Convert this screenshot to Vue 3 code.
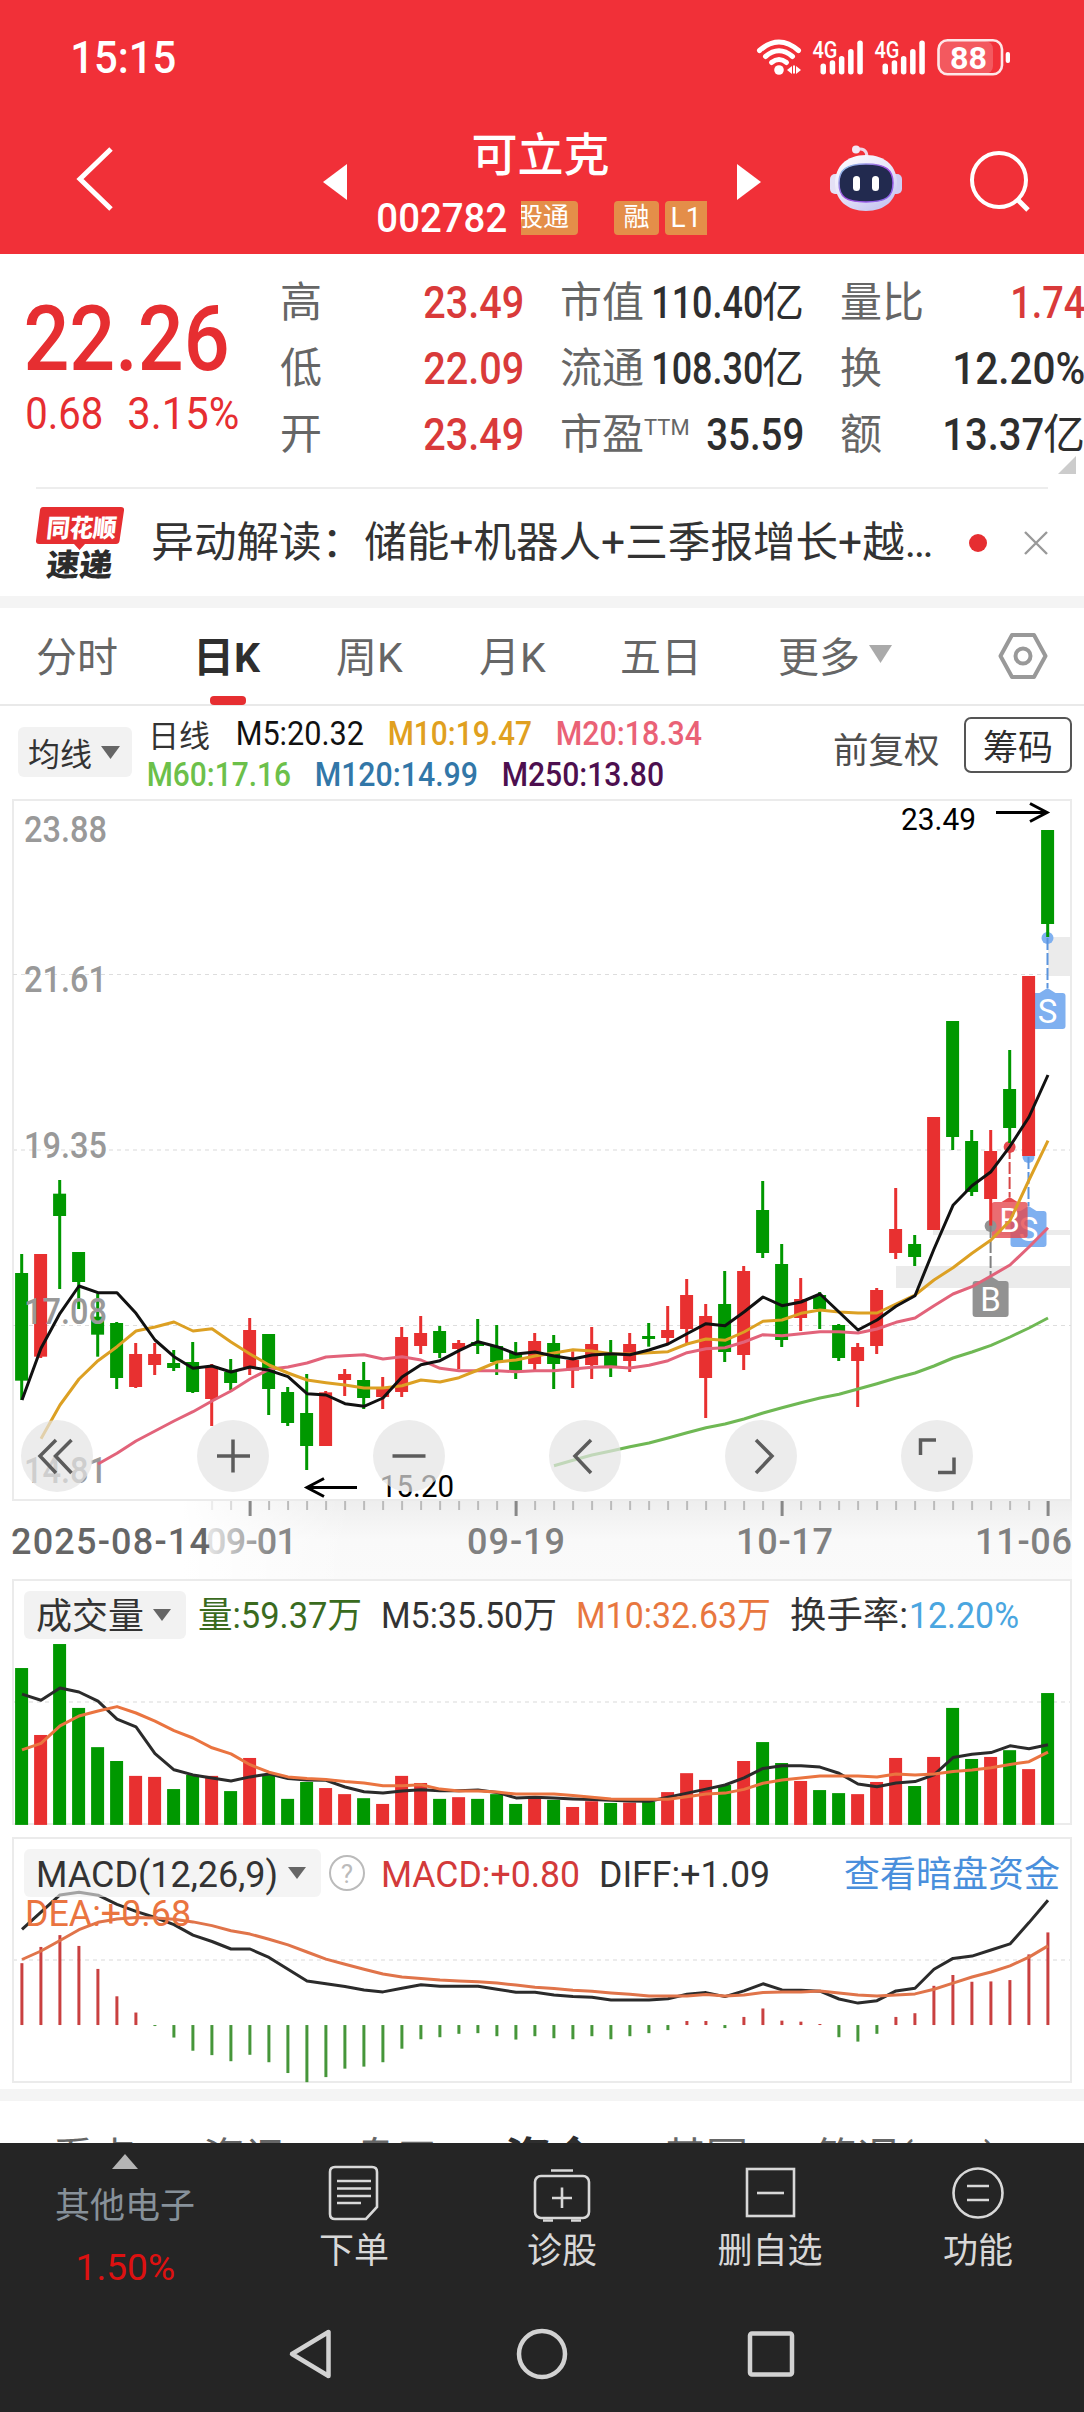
<template>
  <div class="stock-page">
    <!-- Status bar and title -->
    <header class="top">
      <div class="status-bar">
        <Fit t="15:15" :w="103" :s="45" :b="500" />
        <svg class="status-icons" width="256" height="40" viewBox="756 35 256 40" fill="#fff">
          <g fill="none" stroke="#fff" stroke-width="5" stroke-linecap="round">
            <path d="M759.500 48.500Q779 31.500 798.500 48.500" />
            <path d="M765.500 54.500Q779 43 792.500 54.500" />
            <path d="M771.500 60.500Q779 54.500 786.500 60.500" />
          </g>
          <circle cx="779" cy="68" r="4.800" />
          <path d="M787 68l5-4v8zM793 63.500h2v8h-2zM796 64l5 4-5 4z" />
          <g v-for="dx in [0, 62]" :key="dx" :transform="`translate(${dx} 0)`">
            <text x="812.500" y="55.500" font-size="23" font-weight="500" textLength="25" lengthAdjust="spacingAndGlyphs">4G</text>
            <rect x="820.500" y="61.500" width="5.500" height="11" rx="2.700" />
            <rect x="829.700" y="58.300" width="5.500" height="14.200" rx="2.700" />
            <rect x="838.900" y="54" width="5.500" height="18.500" rx="2.700" />
            <rect x="848.100" y="47" width="5.500" height="25.500" rx="2.700" />
            <rect x="857.300" y="38.500" width="5.500" height="34" rx="2.700" />
          </g>
          <rect x="939" y="39" width="54" height="33" rx="8" fill-opacity=".2" />
          <rect x="938.500" y="38.300" width="63.500" height="34" rx="9" fill="none" stroke="#fff" stroke-opacity=".88" stroke-width="2.600" />
          <rect x="1005.700" y="50" width="4.300" height="11" rx="2" />
          <text x="950" y="67" font-size="32" font-weight="700" textLength="37" lengthAdjust="spacingAndGlyphs">88</text>
        </svg>
      </div>
      <div class="title-bar">
        <svg class="back" width="42" height="68" viewBox="0 0 42 68">
          <path d="M37 4L6 34L37 64" fill="none" stroke="#fff" stroke-width="5" />
        </svg>
        <svg class="prev" width="24" height="36" viewBox="0 0 24 36"><path d="M24 0V36L0 18z" fill="#fff" /></svg>
        <div class="name">
          <h1>可立克</h1>
          <div class="code">
            <Fit t="002782" :w="128" :s="41" :b="500" />
            <span class="tag cut">股通</span>
            <span class="tag rong">融</span>
            <span class="tag level">L1</span>
          </div>
        </div>
        <svg class="next" width="24" height="36" viewBox="0 0 24 36"><path d="M0 0V36L24 18z" fill="#fff" /></svg>
        <svg class="robot" width="72" height="67" viewBox="0 0 72 67">
          <defs>
            <linearGradient id="shell" x1="0" y1="0" x2=".6" y2="1">
              <stop offset="0" stop-color="#fff" />
              <stop offset=".6" stop-color="#e6e2f8" />
              <stop offset="1" stop-color="#c9c8f2" />
            </linearGradient>
            <linearGradient id="rim" x1="0" y1="0" x2="1" y2="1">
              <stop offset="0" stop-color="#8fd8ea" />
              <stop offset=".5" stop-color="#a24be0" />
              <stop offset="1" stop-color="#8b6cf0" />
            </linearGradient>
          </defs>
          <path d="M26 4.500Q36 2 37 11" fill="none" stroke="#f0d5e6" stroke-width="3" />
          <circle cx="26" cy="4.500" r="4" fill="#f3e8f6" />
          <rect x="0" y="29" width="12" height="20" rx="5" fill="#e4e0f5" />
          <rect x="60" y="29" width="12" height="20" rx="5" fill="#cfcdf3" />
          <path d="M36 10C56 10 67 22 67 38C67 55 55 66 36 66C17 66 5 55 5 38C5 22 16 10 36 10z" fill="url(#shell)" />
          <path d="M36 19C56 19 63 25 63 38C63 52 56 57 36 57C16 57 9 52 9 38C9 25 16 19 36 19z" fill="#222a4f" stroke="url(#rim)" stroke-width="1.500" />
          <rect x="23" y="31" width="7" height="15" rx="3.500" fill="#fff" />
          <rect x="42" y="31" width="7" height="15" rx="3.500" fill="#fff" />
        </svg>
        <svg class="search" width="62" height="62" viewBox="0 0 62 62" fill="none" stroke="#fff" stroke-width="4">
          <circle cx="30" cy="30" r="27" />
          <path d="M48 49L59 60" stroke-width="5" />
        </svg>
      </div>
    </header>

    <!-- Quote summary -->
    <section class="quote">
      <div class="price">
        <Fit t="22.26" :w="200" :s="90" :b="500" />
        <div class="change">
          <Fit t="0.68" :w="75" :s="44" />
          <Fit t="3.15%" :w="109" :s="44" />
        </div>
      </div>
      <div v-for="(col, c) in quote" :key="c" class="quote-col">
        <div v-for="q in col" :key="q.label" class="quote-row">
          <span>{{ q.label }}<sup v-if="q.sup">{{ q.sup }}</sup></span>
          <span class="val" :class="{ up: q.up }">
            <Fit :t="q.value" :w="q.w" :s="44" :b="500" /><b v-if="q.unit">{{ q.unit }}</b>
          </span>
        </div>
      </div>
      <i class="corner"></i>
    </section>

    <!-- News strip -->
    <section class="news">
      <svg width="90" height="74" viewBox="37 505 90 74">
        <path d="M44 506H122Q125.500 506 125 509.500L120.500 540Q120 543 117 543H86L80.500 549L75 543H40Q36.500 543 37 539.500L41 509Q41.500 506 44 506z" fill="#e62e31" />
        <g transform="skewX(-6)">
          <text x="103" y="536" font-size="25" font-weight="900" fill="#fff" textLength="70" lengthAdjust="spacingAndGlyphs">同花顺</text>
          <text x="107" y="575" font-size="31" font-weight="900" fill="#2c2c2c" textLength="66" lengthAdjust="spacingAndGlyphs">速递</text>
        </g>
      </svg>
      <Fit class="headline" t="异动解读：储能+机器人+三季报增长+越…" :w="779" :s="42" />
      <i class="dot"></i>
      <svg width="24" height="24" viewBox="0 0 24 24"><path d="M1 1L23 23M23 1L1 23" stroke="#999" stroke-width="2.400" /></svg>
    </section>

    <!-- Period tabs -->
    <nav class="tabs">
      <span v-for="t in tabs" :key="t" :class="{ active: t === '日K' }">{{ t }}</span>
      <span class="more">更多<svg width="23" height="18" viewBox="0 0 23 18"><path d="M0 0H23L11.500 18z" fill="#aaa" /></svg></span>
      <svg class="setting" width="50" height="48" viewBox="0 0 50 48" fill="none" stroke="#999" stroke-width="4" stroke-linejoin="round">
        <path d="M14 3H36L47.500 24L36 45H14L2.500 24z" />
        <circle cx="25" cy="24" r="7.500" />
      </svg>
    </nav>

    <!-- Moving averages -->
    <section class="averages">
      <div class="picker">均线<svg width="19" height="13" viewBox="0 0 19 13"><path d="M0 0H19L9.500 13z" fill="#666" /></svg></div>
      <div class="ma-list">
        <div class="ma-row">
          <span class="ma-name">日线</span>
          <Fit class="m5" t="M5:20.32" :w="126" :s="34" />
          <Fit class="m10" t="M10:19.47" :w="142" :s="34" :b="500" />
          <Fit class="m20" t="M20:18.34" :w="144" :s="34" :b="500" />
        </div>
        <div class="ma-row">
          <Fit class="m60" t="M60:17.16" :w="142" :s="34" :b="500" />
          <Fit class="m120" t="M120:14.99" :w="161" :s="34" :b="500" />
          <Fit class="m250" t="M250:13.80" :w="160" :s="34" :b="500" />
        </div>
      </div>
      <span class="adjust">前复权</span>
      <button class="chips">筹码</button>
    </section>

    <!-- Candles and date axis -->
    <svg class="chart" width="1084" height="781" viewBox="0 798 1084 781">
      <defs>
        <linearGradient id="axisX" x1="0" x2="1" y1="0" y2="0">
          <stop offset="0" stop-color="#fff" />
          <stop offset=".16" stop-color="#fff" />
          <stop offset=".32" stop-color="#fff" stop-opacity="0" />
        </linearGradient>
        <linearGradient id="axisY" x1="0" x2="0" y1="0" y2="1">
          <stop offset="0" stop-color="#eee" />
          <stop offset=".5" stop-color="#f9f9f9" />
          <stop offset="1" stop-color="#fafafa" />
        </linearGradient>
        <linearGradient id="fadeDate" gradientUnits="userSpaceOnUse" x1="200" x2="270" y1="0" y2="0">
          <stop offset="0" stop-color="#f2f2f2" />
          <stop offset="1" stop-color="#888" />
        </linearGradient>
      </defs>
      <rect x="12" y="1501" width="1060" height="78" fill="url(#axisY)" />
      <rect x="12" y="1501" width="1060" height="78" fill="url(#axisX)" />

      <rect x="13" y="800" width="1058" height="700" fill="none" stroke="#ebebeb" stroke-width="2" />
      <path d="M13 974.500H1071M13 1325.500H1071" class="grid" />
      <path d="M13 1150H1071" class="grid soft" />
      <g fill="#ebebeb">
        <rect x="1048" y="937" width="23" height="39" />
        <rect x="933" y="1230" width="138" height="5" />
        <rect x="896" y="1266" width="175" height="22" />
      </g>

      <g v-for="(m, i) in marks" :key="'m' + i">
        <circle :cx="m.x" :cy="m.dot" r="6" :fill="m.fill" />
        <path :d="`M${m.x} ${m.dot}V${m.y - 5}`" :stroke="m.line" stroke-width="2" stroke-dasharray="12 3" />
        <path :d="`M${m.x - 8} ${m.y}L${m.x} ${m.y - 5}L${m.x + 8} ${m.y}z`" :fill="m.fill" />
        <rect :x="m.x - 18" :y="m.y" width="36" height="36" rx="3" :fill="m.fill" :fill-opacity="m.alpha" />
        <text :x="m.x" :y="m.y + 30" font-size="33" fill="#fff" text-anchor="middle">{{ m.t }}</text>
      </g>

      <g v-for="(k, i) in candles" :key="'k' + i" :fill="color(i)">
        <rect :x="cx(i) - 1.3" :y="ky(k[1])" width="3" :height="(k[4] - k[1]) / 3" />
        <rect :x="cx(i) - 6.4" :y="ky(k[2])" width="13" :height="(k[3] - k[2]) / 3" />
      </g>

      <g font-size="36" font-weight="500" fill="#999">
        <text v-for="l in levels" :key="l.t" x="24" :y="l.y" textLength="83" lengthAdjust="spacingAndGlyphs">{{ l.t }}</text>
      </g>

      <g fill="none" stroke-width="3" stroke-linejoin="round">
        <polyline :points="line(m60, ky, 28)" stroke="#6fb854" />
        <polyline :points="line(m20, ky, 4)" stroke="#e2637a" />
        <polyline :points="line(m10, ky, 1)" stroke="#dca023" />
        <polyline :points="line(m5, ky)" stroke="#111" />
      </g>

      <g fill="none" stroke="#000" stroke-width="3">
        <path d="M996 812.500H1047M1030 803.500L1047 812.500L1030 821.500" />
        <path d="M357 1487.500H307M324 1478.500L307 1487.500L324 1496.500" />
      </g>
      <text x="901" y="830" font-size="31" textLength="75" lengthAdjust="spacingAndGlyphs">23.49</text>
      <text x="380" y="1497" font-size="31" textLength="74" lengthAdjust="spacingAndGlyphs">15.20</text>

      <g v-for="x in [57, 233, 409, 585, 761, 937]" :key="x">
        <circle :cx="x" cy="1456" r="36" fill="#e4e4e4" fill-opacity=".7" />
      </g>
      <g fill="none" stroke="#5c5c5c" stroke-width="3.500">
        <path d="M56 1440L40 1456L56 1473M71.500 1440L55.500 1456L71.500 1473" />
        <path d="M217 1456H250M233 1439.500V1472.500" />
        <path d="M392.500 1456H425.500" />
        <path d="M591 1440L575 1456L591 1473M756 1440L772 1456L756 1473" />
        <path d="M936 1440H920.500V1455M938 1472.500H954V1457.500" />
      </g>

      <g stroke="#bbb" stroke-width="2">
        <path v-for="i in 45" :key="i" :d="`M${cx(i + 9) + 0.6} 1501V1510`" :stroke-opacity="i < 4 ? i / 4 : 1" />
        <path v-for="i in [12, 26, 40, 54]" :key="'t' + i" :d="`M${cx(i) + 0.6} 1501V1516`" stroke="#888" stroke-width="3" />
      </g>
      <g font-size="36" font-weight="500" fill="#808080">
        <text x="206" y="1554" fill="url(#fadeDate)" textLength="91">09-01</text>
        <text x="11" y="1554" fill="#666" textLength="199">2025-08-14</text>
        <text x="467" y="1554" textLength="98">09-19</text>
        <text x="736" y="1554" textLength="97">10-17</text>
        <text x="975" y="1554" textLength="97">11-06</text>
      </g>
    </svg>

    <!-- Volume -->
    <svg class="chart" width="1084" height="254" viewBox="0 1579 1084 254">
      <rect x="13" y="1580" width="1058" height="244" fill="none" stroke="#ebebeb" stroke-width="2" />
      <path d="M13 1702H1071" class="grid soft" />
      <rect v-for="(v, i) in volume" :key="i" :x="cx(i) - 6.4" :y="sy(v)" width="13" :height="(754 - v) / 2.958" :fill="color(i)" />
      <g fill="none" stroke-width="3" stroke-linejoin="round">
        <polyline :points="line(vol5, sy)" stroke="#2b2b2b" />
        <polyline :points="line(vol10, sy)" stroke="#ea7440" />
      </g>
      <rect x="24" y="1591" width="162" height="48" rx="6" fill="#f2f2f2" />
      <path d="M153 1609H171L162 1621z" fill="#666" />
      <g font-size="36" fill="#333">
        <text x="36" y="1629">成交量</text>
        <text x="198" y="1628" fill="#3a6b1e" textLength="164" lengthAdjust="spacingAndGlyphs">量:59.37万</text>
        <text x="381" y="1628" textLength="176" lengthAdjust="spacingAndGlyphs">M5:35.50万</text>
        <text x="576" y="1628" fill="#e8773f" textLength="195" lengthAdjust="spacingAndGlyphs">M10:32.63万</text>
        <text x="790" y="1628" textLength="118" lengthAdjust="spacingAndGlyphs">换手率:</text>
        <text x="909" y="1628" fill="#4aa6e0" textLength="110" lengthAdjust="spacingAndGlyphs">12.20%</text>
      </g>
    </svg>

    <!-- MACD -->
    <svg class="chart" width="1084" height="256" viewBox="0 1833 1084 256">
      <rect x="13" y="1838" width="1058" height="244" fill="none" stroke="#ebebeb" stroke-width="2" />
      <path d="M13 1960H1071" class="grid soft" />
      <path
        v-for="(v, i) in macd"
        :key="i"
        :d="`M${cx(i) + 0.4} ${sy(1346)}V${sy(v)}`"
        :stroke="v < 1346 ? '#c94040' : '#46963a'"
        stroke-width="3"
      />
      <g fill="none" stroke-width="3" stroke-linejoin="round">
        <polyline :points="line(diff, sy)" stroke="#2b2b2b" />
        <polyline :points="line(dea, sy)" stroke="#e0744a" />
      </g>
      <rect x="24" y="1849" width="297" height="48" rx="6" fill="#eee" fill-opacity=".62" />
      <path d="M288 1867H306L297 1879z" fill="#666" />
      <circle cx="347" cy="1873" r="17" fill="none" stroke="#bbb" stroke-width="2" />
      <text x="347" y="1882.500" font-size="26" fill="#bbb" text-anchor="middle">?</text>
      <g font-size="36" fill="#333">
        <text x="36" y="1887" textLength="242" lengthAdjust="spacingAndGlyphs">MACD(12,26,9)</text>
        <text x="381" y="1887" fill="#d33a3a" textLength="199" lengthAdjust="spacingAndGlyphs">MACD:+0.80</text>
        <text x="599" y="1887" textLength="171" lengthAdjust="spacingAndGlyphs">DIFF:+1.09</text>
        <text x="844" y="1887" fill="#4a8fdc" textLength="216">查看暗盘资金</text>
        <text x="25" y="1925.500" fill="#ea7440" textLength="166" lengthAdjust="spacingAndGlyphs">DEA:+0.68</text>
      </g>
    </svg>

    <div class="sub-tabs">
      <span v-for="s in subTabs" :key="s" :class="{ active: s === '资金' }">{{ s }}</span>
    </div>

    <!-- Bottom toolbar and system keys -->
    <footer class="bottom">
      <div class="toolbar">
        <div class="sector">
          <svg width="26" height="15" viewBox="0 0 26 15"><path d="M13 0L26 15H0z" fill="#b5b5b5" /></svg>
          <span>其他电子</span>
          <Fit class="rise" t="1.50%" :w="97" :s="37" />
        </div>
        <div v-for="a in actions" :key="a.label" class="action">
          <svg width="60" height="58" viewBox="0 0 60 58" fill="none" stroke="#d8d8d8" stroke-width="2.600" v-html="a.icon"></svg>
          <span>{{ a.label }}</span>
        </div>
      </div>
      <div class="system-keys">
        <svg width="46" height="54" viewBox="0 0 46 54"><path d="M41.500 5V49L5 27z" /></svg>
        <svg width="54" height="54" viewBox="0 0 54 54"><circle cx="27" cy="27" r="23" /></svg>
        <svg width="48" height="54" viewBox="0 0 48 54"><rect x="3" y="6.500" width="42" height="41" rx="2" /></svg>
      </div>
    </footer>
  </div>
</template>

<script setup>
import { h } from 'vue';

// Label squeezed to a fixed width, the box is as tall as a capital
// and the side bearings of the glyphs hang out of it
const Fit = (p) =>
  h('svg', { class: 'fit', width: p.w, height: p.s * 0.72 }, [
    h('text', {
      x: -p.s * 0.04,
      y: p.s * 0.715,
      'font-size': p.s,
      'font-weight': p.b || 400,
      textLength: p.w + p.s * 0.07,
      lengthAdjust: 'spacingAndGlyphs',
      fill: 'currentColor',
    }, p.t),
  ]);
Fit.props = ['t', 'w', 's', 'b'];

const quote = [
  [
    { label: '高', value: '23.49', w: 98, up: true },
    { label: '低', value: '22.09', w: 98, up: true },
    { label: '开', value: '23.49', w: 98, up: true },
  ],
  [
    { label: '市值', value: '110.40', w: 109, unit: '亿' },
    { label: '流通', value: '108.30', w: 109, unit: '亿' },
    { label: '市盈', sup: 'TTM', value: '35.59', w: 95 },
  ],
  [
    { label: '量比', value: '1.74', w: 72, up: true },
    { label: '换', value: '12.20%', w: 130 },
    { label: '额', value: '13.37', w: 99, unit: '亿' },
  ],
];

const tabs = ['分时', '日K', '周K', '月K', '五日'];
const subTabs = ['看点', '资讯', '盘口', '资金', '基因', '简况(F10)'];

const levels = [
  { t: '23.88', y: 842 },
  { t: '21.61', y: 992 },
  { t: '19.35', y: 1158 },
  { t: '17.08', y: 1324 },
  { t: '14.81', y: 1483 },
];

const marks = [
  { t: 'S', x: 1047.5, dot: 938, y: 993, fill: '#7fb0f0', line: '#5b94dd', alpha: 1 },
  { t: 'S', x: 1028.5, dot: 1157, y: 1211, fill: '#7fb0f0', line: '#5b94dd', alpha: 1 },
  { t: 'B', x: 1009.6, dot: 1147, y: 1202, fill: '#e5484d', line: '#d64545', alpha: 0.8 },
  { t: 'B', x: 990.6, dot: 1226, y: 1281, fill: '#929292', line: '#808080', alpha: 1 },
];

// [up, high, body top, body bottom, low], thirds of a pixel below y = 1160
const candles = [
  [0, 282, 339, 662, 720], [1, 282, 282, 590, 594], [0, 60, 101, 168, 387], [0, 276, 276, 366, 447], [0, 400, 470, 524, 590],
  [0, 486, 489, 654, 687], [1, 549, 582, 681, 684], [1, 549, 582, 615, 645], [0, 570, 609, 624, 633], [0, 546, 606, 696, 699],
  [1, 612, 619, 717, 798], [0, 597, 636, 669, 690], [1, 474, 510, 621, 645], [0, 522, 522, 687, 765], [0, 681, 696, 789, 798],
  [0, 642, 759, 858, 930], [1, 693, 697, 858, 858], [1, 627, 642, 660, 708], [0, 606, 660, 714, 747], [1, 651, 681, 711, 747],
  [1, 501, 531, 696, 711], [1, 468, 519, 558, 582], [0, 498, 513, 579, 594], [1, 540, 549, 567, 627], [0, 477, 546, 558, 582],
  [0, 495, 558, 606, 645], [0, 546, 579, 636, 657], [1, 519, 543, 612, 636], [0, 525, 549, 612, 687], [1, 574, 600, 632, 684],
  [1, 501, 552, 615, 657], [0, 540, 579, 618, 651], [1, 519, 552, 603, 636], [0, 489, 528, 537, 560], [1, 438, 510, 534, 549],
  [1, 357, 405, 507, 552], [1, 432, 468, 654, 774], [0, 333, 432, 576, 606], [1, 318, 333, 585, 630], [0, 63, 150, 279, 294],
  [0, 252, 312, 540, 561], [1, 354, 417, 474, 513], [0, 396, 405, 447, 507], [0, 492, 495, 594, 603], [1, 549, 561, 603, 741],
  [1, 384, 390, 558, 582], [1, 84, 207, 279, 297], [0, 225, 252, 291, 318], [1, -129, -129, 210, 210], [0, -417, -417, -69, -30],
  [0, -90, -57, 96, 108], [1, -90, -27, 117, 197], [0, -330, -213, -96, -51], [1, -552, -552, -12, -12], [0, -990, -990, -708, -669],
];
const m5 = [720, 565, 460, 378, 398, 398, 460, 540, 590, 625, 618, 636, 621, 631, 650, 701, 705, 731, 739, 714, 651, 614, 602, 572, 545, 560, 582, 576, 588, 597, 585, 581, 584, 570, 552, 521, 491, 497, 456, 411, 437, 426, 402, 456, 510, 480, 439, 407, 267, 136, 77, 35, -41, -129, -255];
const m10 = [836, 735, 657, 602, 560, 513, 501, 486, 513, 506, 546, 582, 615, 639, 660, 668, 675, 684, 684, 677, 660, 666, 653, 630, 606, 600, 588, 579, 569, 573, 581, 582, 578, 575, 552, 537, 541, 516, 484, 480, 460, 450, 456, 459, 459, 432, 405, 360, 323, 280, 240, 182, 60, -58];
const m20 = [912, 880, 843, 813, 783, 755, 723, 693, 657, 628, 621, 609, 591, 587, 584, 597, 590, 600, 625, 632, 632, 632, 635, 632, 632, 627, 622, 620, 624, 616, 602, 578, 566, 563, 546, 524, 527, 521, 515, 515, 519, 507, 487, 474, 437, 402, 380, 348, 315, 261, 203];
const m60 = [917, 901, 885, 873, 860, 849, 834, 818, 803, 792, 777, 759, 743, 728, 714, 703, 687, 671, 654, 639, 618, 594, 576, 556, 531, 504, 474];

const volume = [290, 488, 219, 408, 524, 565, 609, 612, 648, 606, 609, 654, 556, 606, 677, 627, 645, 663, 675, 692, 609, 630, 677, 672, 677, 663, 692, 675, 680, 701, 684, 689, 688, 685, 657, 601, 621, 636, 565, 509, 571, 624, 651, 660, 663, 627, 556, 639, 553, 408, 559, 553, 533, 589, 364];
const vol5 = [367, 385, 349, 361, 388, 441, 464, 543, 591, 606, 615, 624, 612, 603, 617, 621, 622, 642, 656, 660, 654, 650, 653, 653, 651, 658, 674, 672, 674, 677, 679, 681, 683, 684, 672, 660, 648, 636, 615, 587, 579, 579, 583, 601, 633, 641, 630, 626, 606, 555, 545, 540, 520, 529, 517];
const vol10 = [532, 513, 461, 432, 417, 404, 423, 447, 475, 497, 526, 544, 576, 598, 612, 617, 620, 626, 630, 638, 638, 635, 648, 654, 654, 657, 663, 663, 663, 667, 672, 677, 678, 678, 678, 671, 663, 660, 649, 631, 621, 615, 609, 609, 609, 612, 603, 606, 603, 596, 592, 585, 575, 567, 539];

const macd = [1163, 1115, 1080, 1112, 1180, 1261, 1309, 1349, 1383, 1422, 1435, 1453, 1434, 1456, 1488, 1515, 1500, 1475, 1469, 1456, 1416, 1388, 1382, 1372, 1370, 1379, 1389, 1379, 1385, 1388, 1379, 1388, 1379, 1370, 1361, 1334, 1334, 1355, 1322, 1297, 1333, 1336, 1343, 1382, 1395, 1372, 1322, 1311, 1230, 1198, 1218, 1217, 1213, 1137, 1072];
const diff = [1063, 1012, 961, 953, 962, 989, 1010, 1028, 1049, 1080, 1099, 1121, 1121, 1146, 1181, 1216, 1224, 1232, 1242, 1248, 1237, 1227, 1231, 1231, 1231, 1240, 1249, 1249, 1257, 1262, 1264, 1272, 1272, 1272, 1268, 1255, 1250, 1262, 1245, 1224, 1242, 1243, 1246, 1269, 1281, 1274, 1245, 1237, 1181, 1149, 1142, 1124, 1106, 1043, 977];
const dea = [1152, 1127, 1096, 1064, 1042, 1032, 1028, 1029, 1033, 1041, 1052, 1067, 1077, 1092, 1109, 1130, 1151, 1166, 1181, 1195, 1204, 1208, 1213, 1216, 1218, 1222, 1228, 1234, 1238, 1243, 1246, 1251, 1255, 1260, 1260, 1260, 1256, 1260, 1257, 1250, 1248, 1248, 1245, 1251, 1257, 1260, 1257, 1254, 1240, 1222, 1204, 1189, 1171, 1145, 1112];

const cx = (i) => 21.5 + i * 19;
const ky = (v) => 1160 + v / 3;
const sy = (v) => 1570 + v / 2.958;
const color = (i) => (candles[i][0] ? '#e83030' : '#009800');

function line(values, scale, from = 0) {
  return values.map((v, i) => `${cx(i + from) + 0.5},${scale(v).toFixed(1)}`).join(' ');
}

const actions = [
  { label: '下单', icon: '<path d="M11 3H48Q53 3 53 8V43L42 55H11Q6 55 6 50V8Q6 3 11 3z"/><path d="M13 17H47M13 24.500H47M13 32H47M13 39H37"/>' },
  { label: '诊股', icon: '<rect x="3" y="12" width="54" height="42" rx="6"/><path d="M19 6.500H41M30 23.500V44M20 34H40M11 56.500H21M39 56.500H49"/>' },
  { label: '删自选', icon: '<rect x="7" y="5" width="47" height="47"/><path d="M17 29H44"/>' },
  { label: '功能', icon: '<circle cx="30" cy="29" r="24.500"/><path d="M19 22H41M19 36H41"/>' },
];
</script>

<style>
body {
  background: #fff;
}
.fit {
  display: block;
  flex: none;
  overflow: visible;
}
</style>

<style scoped>
.stock-page {
  width: 1084px;
  height: 2412px;
  overflow: hidden;
  display: flex;
  flex-direction: column;
  background: #fff;
  color: #333;
  font-family: Roboto, "Noto Sans CJK SC", sans-serif;
}
.stock-page > * {
  flex: none;
}
svg {
  flex: none;
}

/* Header */
.top {
  height: 254px;
  background: #f13038;
  color: #fff;
}
.status-bar {
  display: flex;
  justify-content: space-between;
  align-items: center;
  box-sizing: border-box;
  height: 114px;
  padding: 0 72px;
}
.title-bar {
  display: flex;
  align-items: flex-start;
  height: 140px;
}
.back {
  margin: 31px 0 0 74px;
}
.prev {
  margin: 50px 0 0 207px;
}
.name {
  width: 329px;
  margin: 14px 30px 0 31px;
}
h1 {
  margin: 0;
  height: 54px;
  line-height: 54px;
  font-size: 46px;
  font-weight: 500;
  text-align: center;
  padding-right: 4px;
}
.code {
  display: flex;
  align-items: center;
  height: 34px;
  margin-top: 19px;
}
.tag {
  box-sizing: border-box;
  height: 34px;
  line-height: 33px;
  font-size: 26px;
  text-align: center;
  border-radius: 4px;
  background: #e48e49;
  white-space: nowrap;
}
.cut {
  display: flex;
  justify-content: flex-end;
  width: 57px;
  margin-left: 15px;
  padding-right: 9px;
  overflow: hidden;
  border-radius: 0 4px 4px 0;
}
.rong {
  width: 45px;
  margin-left: 36px;
}
.level {
  width: 42px;
  margin-left: 6px;
  font-size: 28px;
  border-radius: 4px 0 0 4px;
}
.next {
  margin-top: 50px;
}
.robot {
  margin: 31px 0 0 69px;
}
.search {
  margin: 36px 0 0 67px;
}

/* Quote */
.quote {
  position: relative;
  display: flex;
  height: 219px;
  box-sizing: border-box;
  padding-top: 16px;
  margin-bottom: 14px;
}
.price {
  width: 255px;
  padding: 36px 0 0 27px;
  color: #e62e31;
  box-sizing: border-box;
  margin-right: 26px;
}
.change {
  display: flex;
  gap: 27px;
  margin-top: 27px;
}
.quote-col {
  width: 242px;
  margin-right: 38px;
}
.quote-col:last-of-type {
  width: 243px;
  margin-right: 0;
}
.quote-row {
  display: flex;
  align-items: center;
  justify-content: space-between;
  height: 66px;
  font-size: 42px;
  line-height: 66px;
  color: #666;
  white-space: nowrap;
}
.quote-row > span:first-child {
  margin-left: -1px;
}
sup {
  font-size: 22px;
  line-height: 0;
  vertical-align: 14px;
}
.val {
  display: flex;
  align-items: center;
  color: #2e2e2e;
}
.val b {
  font-weight: 400;
  width: 41px;
}
.up {
  color: #d93a3a;
}
.corner {
  position: absolute;
  right: 8px;
  bottom: -1px;
  border-left: 18px solid transparent;
  border-bottom: 18px solid #ccc;
}

/* News */
.news {
  display: flex;
  align-items: center;
  height: 107px;
  margin: 0 36px;
  border-top: 2px solid #ededed;
}
.headline {
  margin-left: 27px;
}
.dot {
  flex: none;
  width: 18px;
  height: 18px;
  margin: 0 37px 0 37px;
  border-radius: 50%;
  background: #e62e31;
}

/* Tabs */
.tabs {
  display: flex;
  align-items: center;
  height: 96px;
  padding-left: 36px;
  border-top: 12px solid #f4f4f4;
  border-bottom: 2px solid #e9e9e9;
  font-size: 41px;
  color: #666;
}
.tabs span {
  position: relative;
  top: -2px;
  width: 83px;
  margin-right: 64px;
  white-space: nowrap;
}
.tabs span:nth-child(n + 2):nth-child(-n + 4) {
  width: 69px;
  margin-right: 74px;
}
.tabs span.active {
  margin-left: 10px;
  margin-right: 74px;
  color: #2e2e2e;
  font-weight: 700;
}
.tabs span.active::after {
  content: "";
  position: absolute;
  left: 17px;
  bottom: -21px;
  width: 36px;
  height: 9px;
  border-radius: 4px;
  background: #e62e31;
}
.tabs span:nth-child(5) {
  width: 82px;
  margin-left: -2px;
  margin-right: 76px;
}
.tabs .more {
  display: flex;
  align-items: center;
  gap: 9px;
  width: 114px;
  margin-right: 106px;
}

/* Averages */
.averages {
  display: flex;
  align-items: center;
  height: 92px;
  padding-left: 18px;
}
.picker {
  display: flex;
  align-items: center;
  gap: 9px;
  width: 104px;
  height: 50px;
  padding-left: 10px;
  border-radius: 6px;
  background: #f2f2f2;
  font-size: 32px;
}
.ma-list {
  width: 685px;
  margin: 4px 0 0 16px;
}
.ma-row {
  display: flex;
  align-items: center;
  height: 41px;
}
.ma-row > * {
  margin-right: 26px;
}
.ma-name {
  width: 63px;
  font-size: 31px;
}
.m5 { color: #111; }
.m10 { color: #e0a020; }
.m20 { color: #ea6276; }
.m60 { color: #6cc04a; }
.m120 { color: #3277a8; }
.m250 { color: #4d0f4f; }
.adjust {
  width: 131px;
  margin-bottom: 9px;
  font-size: 35.500px;
  color: #4d4d4d;
}
.chips {
  width: 108px;
  height: 56px;
  margin-bottom: 14px;
  padding: 0;
  border: 2px solid #555;
  border-radius: 7px;
  background: #fff;
  color: #2e2e2e;
  font: 35px/50px "Noto Sans CJK SC", sans-serif;
}

/* Charts */
.chart {
  display: block;
}
.grid {
  stroke: #ddd;
  stroke-width: 1;
  stroke-dasharray: 4 4;
}
.soft {
  stroke: #ececec;
  stroke-width: 2;
}

.sub-tabs {
  display: flex;
  box-sizing: border-box;
  height: 54px;
  padding: 28px 0 0 52px;
  overflow: hidden;
  border-top: 12px solid #f4f4f4;
  font-size: 42px;
  line-height: 60px;
  color: #666;
}
.sub-tabs span {
  margin-right: 67px;
  white-space: nowrap;
}
.sub-tabs .active {
  color: #2e2e2e;
  font-size: 46px;
  font-weight: 700;
}

/* Bottom */
.bottom {
  height: 269px;
  background: #252525;
  color: #d8d8d8;
}
.toolbar {
  display: flex;
  height: 180px;
}
.sector {
  display: flex;
  flex-direction: column;
  align-items: center;
  width: 250px;
  padding-top: 11px;
}
.sector span {
  margin: 11px 0 20px;
  font-size: 35px;
  line-height: 54px;
  color: #87919a;
}
.rise {
  color: #dd1111;
}
.action {
  display: flex;
  flex-direction: column;
  align-items: center;
  width: 208px;
  padding-top: 21px;
}
.action span {
  margin-top: 2px;
  font-size: 35px;
  line-height: 56px;
}
.system-keys {
  display: flex;
  padding: 4px 0 0 287px;
  fill: none;
  stroke: #d2d2d2;
  stroke-width: 4.500;
  stroke-linejoin: round;
}
.system-keys svg:nth-child(2) {
  margin: 0 178px 0 182px;
}
</style>
